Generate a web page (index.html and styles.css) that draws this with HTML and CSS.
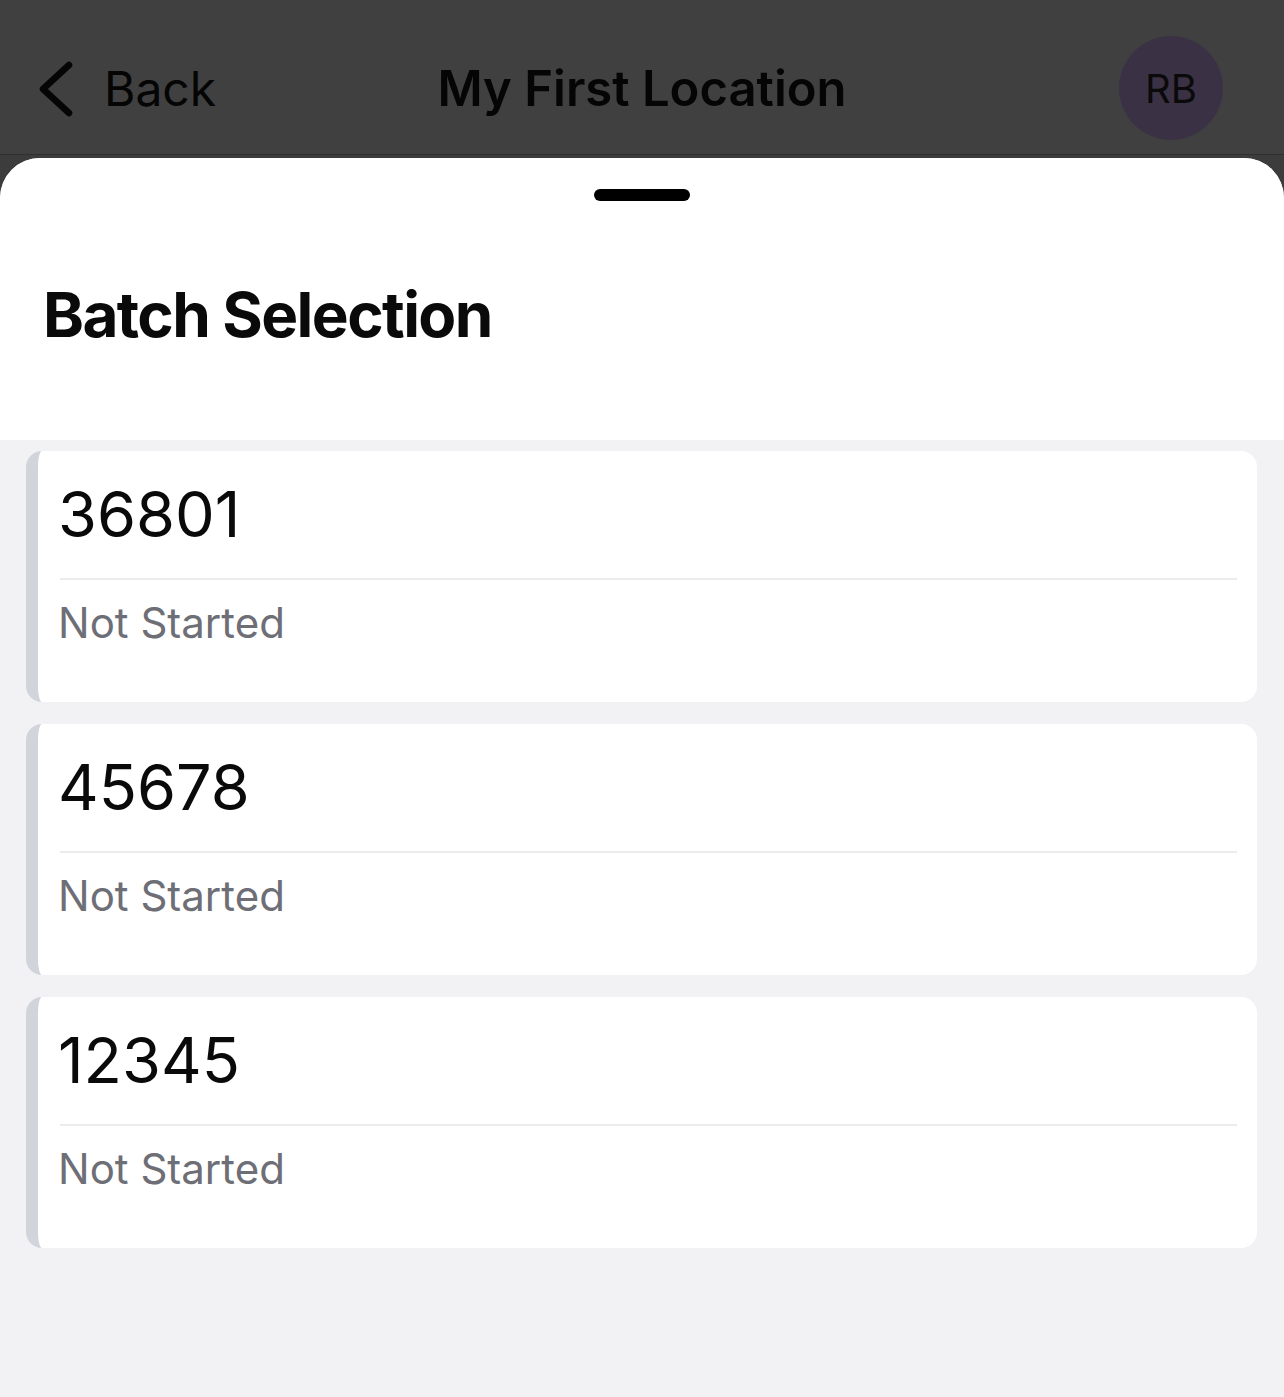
FILE: index.html
```html
<!DOCTYPE html>
<html lang="en">
<head>
  <meta charset="UTF-8" />
  <title>Batch Selection</title>
  <link rel="stylesheet" href="styles.css">
</head>
<body>
  <div class="page">
    <header class="top-bar">
      <div class="back">
        <svg class="chevron" width="40" height="60" viewBox="0 0 40 60" aria-hidden="true">
          <path d="M31 6 L5 30 L31 54" fill="none" stroke="#050505" stroke-width="6.5" stroke-linecap="round" stroke-linejoin="round" />
        </svg>
        <span>Back</span>
      </div>
      <h1>My First Location</h1>
      <div class="avatar">RB</div>
    </header>

    <!-- Hoja de selección -->
    <div class="sheet-wrap">
      <div class="sheet">
        <div class="sheet-head">
          <div class="handle"></div>
          <h2>Batch Selection</h2>
        </div>
        <div class="batch-list">
          <div class="batch-card">
            <div class="batch-number">36801</div>
            <div class="divider"></div>
            <div class="batch-status">Not Started</div>
          </div>
          <div class="batch-card">
            <div class="batch-number">45678</div>
            <div class="divider"></div>
            <div class="batch-status">Not Started</div>
          </div>
          <div class="batch-card">
            <div class="batch-number">12345</div>
            <div class="divider"></div>
            <div class="batch-status">Not Started</div>
          </div>
        </div>
      </div>
    </div>
  </div>
</body>
</html>
```

FILE: styles.css
```css
html, body {
  margin: 0;
  height: 100%;
}
body {
  font-family: 'Inter', 'Noto Sans', sans-serif;
  background: #f2f2f4;
  color: #0a0a0a;
}
.page {
  display: flex;
  flex-direction: column;
  min-height: 100vh;
}

/* Barra superior */
.top-bar {
  height: 155px;
  box-sizing: border-box;
  background: #404040;
  border-bottom: 1px solid #2f2f2f;
  display: flex;
  align-items: center;
  justify-content: space-between;
  padding: 22px 61px 0 38px;
  position: relative;
}
.back {
  display: flex;
  align-items: center;
  gap: 26px;
  font-size: 48px;
  color: #050505;
}
.chevron {
  display: block;
  margin-top: 2px;
}
.top-bar h1 {
  position: absolute;
  left: 0;
  right: 0;
  top: 22px;
  bottom: 0;
  margin: 0;
  display: flex;
  align-items: center;
  justify-content: center;
  font-size: 49px;
  font-weight: 600;
  color: #050505;
  pointer-events: none;
}
.avatar {
  width: 104px;
  height: 104px;
  border-radius: 50%;
  background: #3b3144;
  color: #0a0a0a;
  font-size: 40px;
  display: flex;
  align-items: center;
  justify-content: center;
}

/* Hoja */
.sheet-wrap {
  flex: 1;
  display: flex;
  flex-direction: column;
  background: #3c3c3c;
  padding-top: 3px;
}
.sheet {
  flex: 1;
  display: flex;
  flex-direction: column;
  border-radius: 40px 40px 0 0;
  overflow: hidden;
  background: #f2f2f4;
}
.sheet-head {
  background: #ffffff;
  padding-top: 31px;
  height: 282px;
  box-sizing: border-box;
}
.handle {
  width: 96px;
  height: 12px;
  border-radius: 6px;
  background: #000000;
  margin: 0 auto;
}
.sheet-head h2 {
  margin: 77px 0 0 43px;
  font-size: 62px;
  line-height: 1.2;
  font-weight: 700;
  color: #0a0a0a;
  letter-spacing: -1.6px;
}

/* Lista de lotes */
.batch-list {
  display: flex;
  flex-direction: column;
  gap: 22px;
  padding: 11px 27px 0 26px;
}
.batch-card {
  background: #ffffff;
  border-left: 12px solid #d1d4db;
  border-radius: 16px;
  padding: 26px 20px 54px 22px;
}
.batch-number {
  font-size: 63px;
  line-height: 1.2;
  color: #0a0a0a;
  margin-left: -2px;
}
.divider {
  height: 2px;
  background: #ececee;
  margin: 25px 0 18px 0;
}
.batch-status {
  font-size: 42px;
  line-height: 1.2;
  color: #6e6e76;
  margin-left: -2px;
}
```
